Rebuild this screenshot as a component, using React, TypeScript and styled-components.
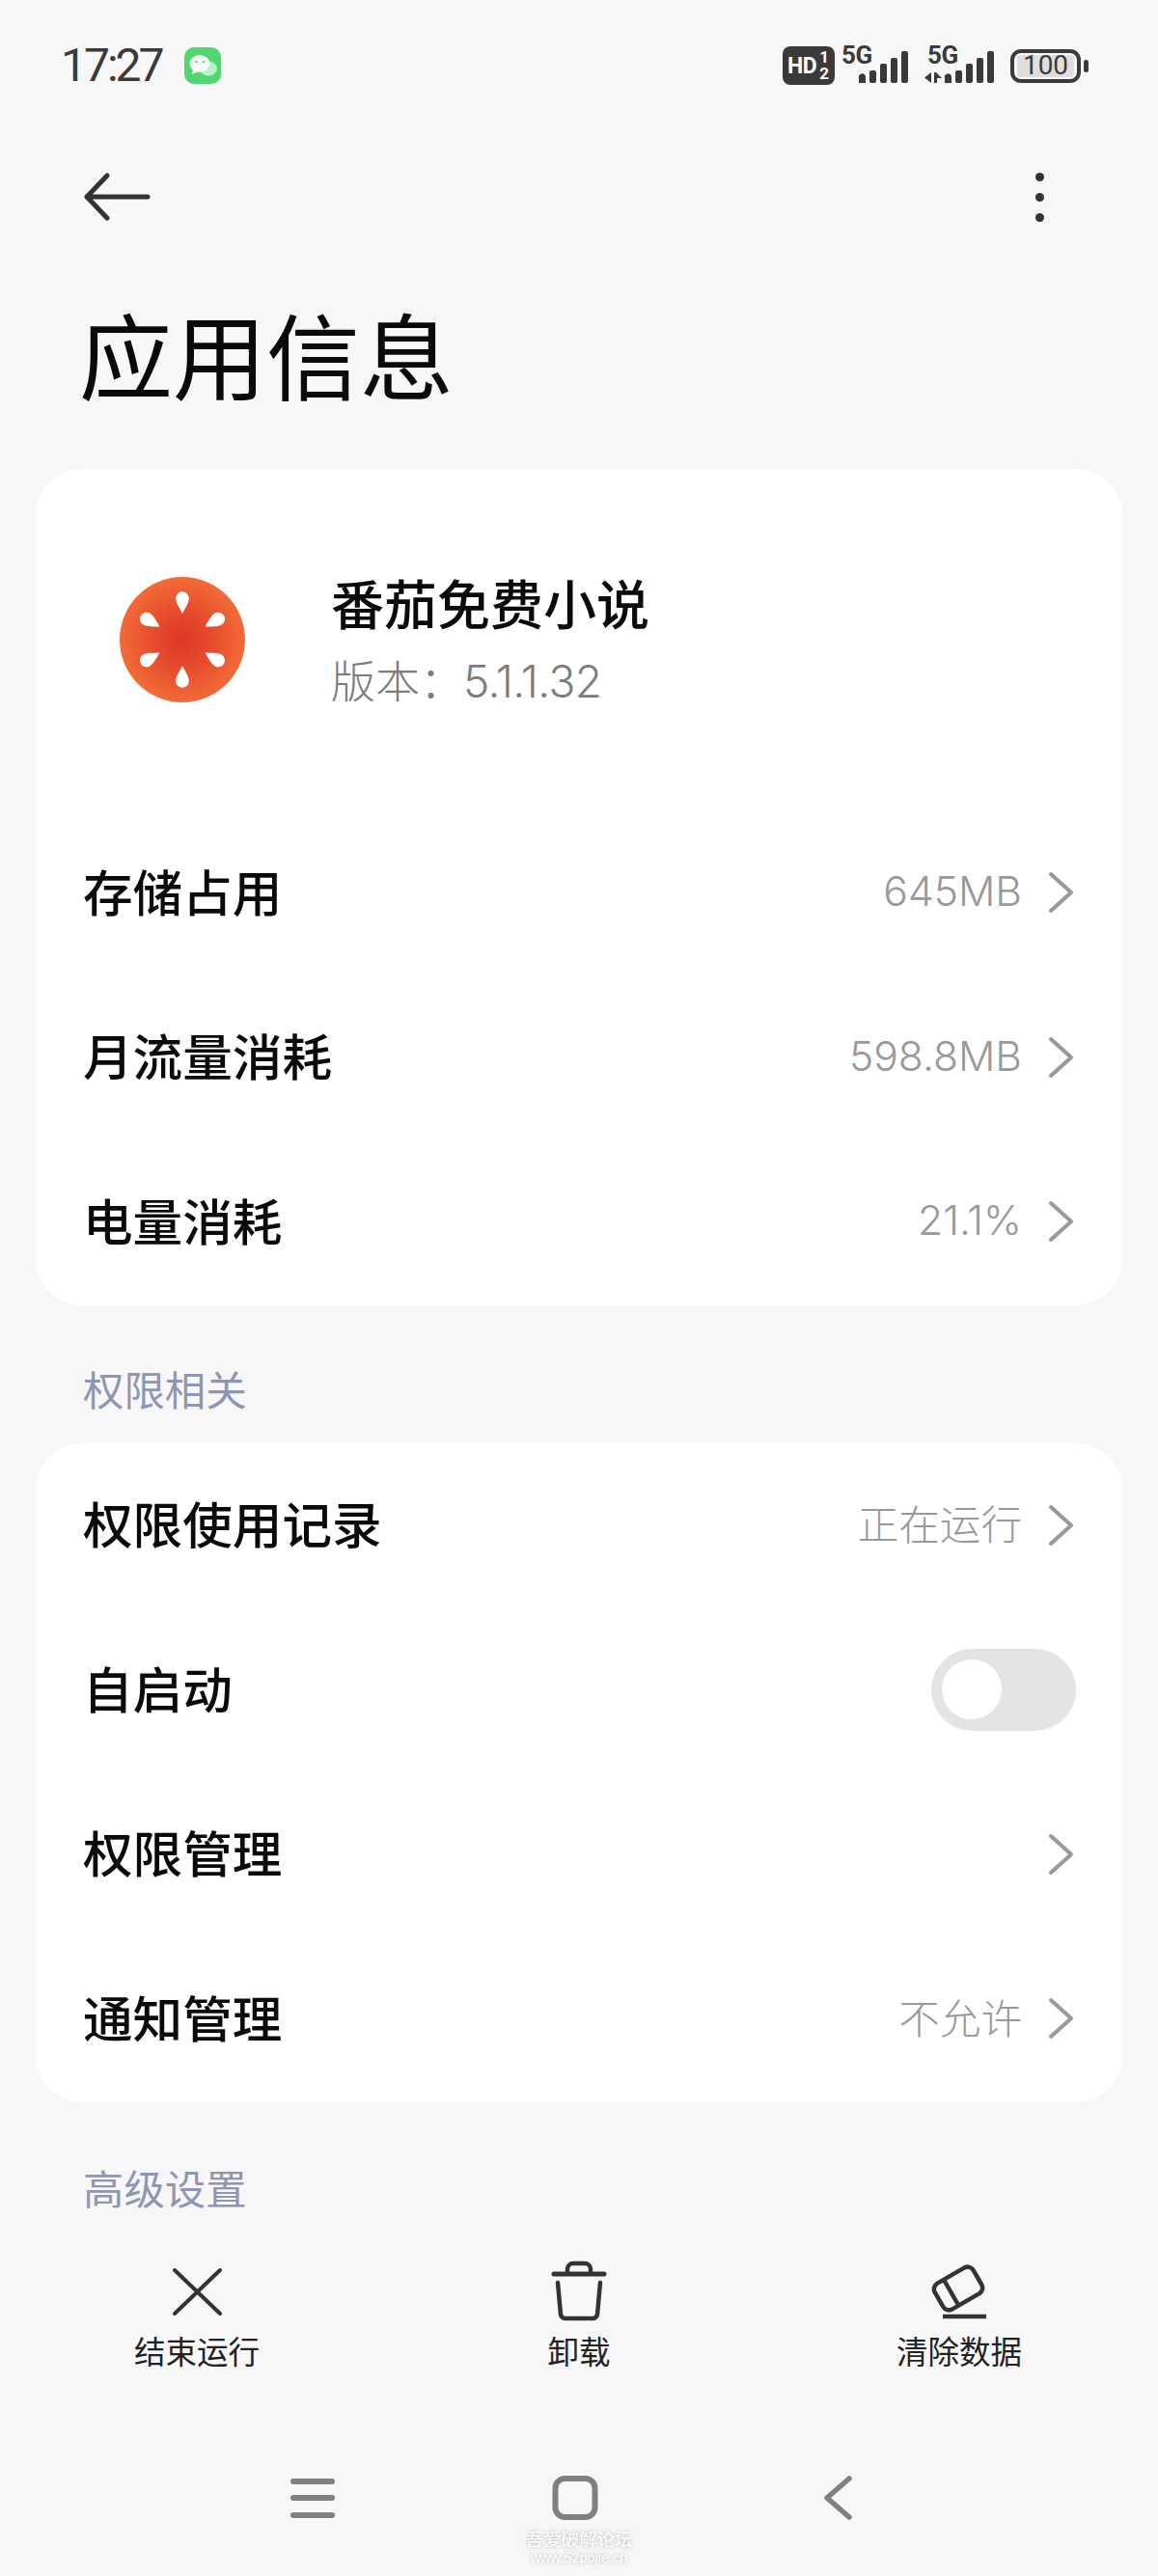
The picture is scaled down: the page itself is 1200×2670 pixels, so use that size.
import React from "react";
import styled, { createGlobalStyle } from "styled-components";

const Global = createGlobalStyle`
  html, body { margin: 0; padding: 0; background: #f7f7f7; }
  body { width: 1200px; height: 2670px; overflow: hidden; font-family: "Noto Sans CJK SC", "Noto Sans", sans-serif; color: #0a0a0a; }
`;

const Page = styled.div`
  width: 1200px;
  height: 2670px;
  display: flex;
  flex-direction: column;
  background: #f7f7f7;
`;

const StatusBar = styled.div`
  height: 136px;
  display: flex;
  align-items: center;
  padding: 0 80px 0 63px;
`;

const Time = styled.span`
  font-family: Roboto, sans-serif;
  font-size: 48px;
  font-weight: 400;
  line-height: 1;
  color: #3a3a3a;
  letter-spacing: -3px;
`;

const WeChat = styled.svg`
  width: 38px;
  height: 38px;
  margin-left: 23px;
`;

const StatusRight = styled.div`
  margin-left: auto;
  display: flex;
  align-items: center;
`;

const HdBadge = styled.div`
  width: 54px;
  height: 40px;
  border-radius: 8px;
  background: #3a3a3a;
  color: #fff;
  display: flex;
  align-items: center;
  padding-left: 5px;
  box-sizing: border-box;
  font-family: Roboto, sans-serif;
  font-weight: 700;
  font-size: 23px;
  letter-spacing: -0.5px;
`;

const Fraction = styled.span`
  display: flex;
  flex-direction: column;
  font-size: 17px;
  line-height: 17px;
  margin-left: 3px;
  align-items: center;
`;

const Signal = styled.div<{ $w: number; $gap: number }>`
  position: relative;
  width: ${(p) => p.$w}px;
  height: 40px;
  margin-left: ${(p) => p.$gap}px;
`;

const FiveG = styled.span<{ $left: number }>`
  position: absolute;
  left: ${(p) => p.$left}px;
  top: -3px;
  font-family: Roboto, sans-serif;
  font-weight: 700;
  font-size: 26px;
  line-height: 24px;
  letter-spacing: -0.5px;
  color: #3a3a3a;
`;

const Bars = styled.svg`
  position: absolute;
  left: 0;
  top: 0;
  display: block;
`;

const Battery = styled.div`
  position: relative;
  width: 73px;
  height: 35px;
  margin-left: 15px;
  box-sizing: border-box;
  border: 4px solid #3a3a3a;
  border-radius: 11px;
  padding: 2px 3px;
  &::after {
    content: "";
    position: absolute;
    right: -12px;
    top: 7px;
    width: 5px;
    height: 13px;
    border-radius: 3px;
    background: #3a3a3a;
  }
`;

const BatteryFill = styled.div`
  height: 100%;
  background: #dedede;
  border-radius: 4px;
  display: flex;
  align-items: center;
  justify-content: center;
  font-family: Roboto, sans-serif;
  font-size: 28px;
  color: #3a3a3a;
  line-height: 1;
`;

const Nav = styled.div`
  height: 136px;
  display: flex;
  align-items: center;
  justify-content: space-between;
  padding: 0 118px 0 87px;
`;

const BackArrow = styled.svg`
  width: 70px;
  height: 50px;
  display: block;
`;

const Dots = styled.div`
  display: flex;
  flex-direction: column;
  gap: 12px;
`;

const Dot = styled.span`
  width: 9px;
  height: 9px;
  border-radius: 50%;
  background: #333;
`;

const Title = styled.h1`
  margin: 0 0 28px;
  height: 186px;
  padding-left: 82px;
  font-size: 97px;
  font-weight: 400;
  line-height: 186px;
  color: #0a0a0a;
`;

const Card = styled.section`
  margin: 0 37px;
  background: #fff;
  border-radius: 48px;
  padding-bottom: 1px;
`;

const AppHeader = styled.div`
  height: 354px;
  display: flex;
  align-items: center;
  padding-left: 87px;
  box-sizing: border-box;
`;

const AppLogo = styled.svg`
  width: 132px;
  height: 132px;
  margin-left: -1px;
  margin-right: 88px;
`;

const AppMeta = styled.div`
  display: flex;
  flex-direction: column;
  gap: 14px;
  margin-top: -3px;
`;

const AppName = styled.div`
  font-size: 55px;
  font-weight: 500;
  line-height: 72px;
  color: #0a0a0a;
`;

const AppVersion = styled.div`
  font-size: 46px;
  line-height: 60px;
  color: #7c7c7c;
  font-weight: 300;
`;

const VersionNumber = styled.span`
  font-family: Inter, sans-serif;
  letter-spacing: -0.6px;
  margin-left: -1px;
`;

const Row = styled.div`
  height: 170.5px;
  display: flex;
  align-items: center;
  padding: 0 50px;
  box-sizing: border-box;
`;

const RowLabel = styled.span`
  font-size: 51.6px;
  font-weight: 500;
  margin-left: -1px;
  padding-bottom: 6px;
  color: #0a0a0a;
`;

const RowValue = styled.span<{ $cjk?: boolean }>`
  margin-left: auto;
  font-family: Inter, "Noto Sans CJK SC", sans-serif;
  font-size: 42.6px;
  font-weight: 300;
  color: #999;
  padding-bottom: ${(p) => (p.$cjk ? "6px" : "3px")};
`;

const Chevron = styled.svg<{ $solo?: boolean }>`
  width: 27px;
  height: 44px;
  margin-left: ${(p) => (p.$solo ? "auto" : "27px")};
`;

const Toggle = styled.div`
  margin-left: auto;
  margin-right: -2px;
  width: 150px;
  height: 85px;
  border-radius: 43px;
  background: #e4e4e4;
  display: flex;
  align-items: center;
  padding-left: 11px;
  box-sizing: border-box;
`;

const Knob = styled.span`
  width: 62px;
  height: 62px;
  border-radius: 50%;
  background: #fff;
`;

const SectionLabel = styled.div`
  height: 143px;
  box-sizing: border-box;
  padding: 56px 0 0 86px;
  font-size: 42.4px;
  line-height: 60px;
  color: #8f96b3;
`;

const SectionLabelLast = styled(SectionLabel)`
  height: 122px;
  padding-top: 58px;
`;

const Toolbar = styled.div`
  display: grid;
  grid-template-columns: 396px 396px 392px;
  padding: 0 6px;
  margin-top: 42px;
`;

const ToolItem = styled.div`
  display: flex;
  flex-direction: column;
  align-items: center;
`;

const ToolIcon = styled.svg`
  width: 64px;
  height: 64px;
  display: block;
`;

const ToolLabel = styled.span`
  margin-top: 7px;
  font-size: 32.5px;
  line-height: 44px;
  color: #222;
`;

const SystemNav = styled.div`
  position: relative;
  display: grid;
  grid-template-columns: repeat(3, 272px);
  justify-content: center;
  padding-right: 9px;
  margin-top: 101px;
`;

const SystemSlot = styled.div`
  display: flex;
  justify-content: center;
`;

const SystemIcon = styled.svg`
  width: 60px;
  height: 60px;
  display: block;
`;

const Watermark = styled.div`
  position: absolute;
  left: 0;
  right: 0;
  top: 62px;
  text-align: center;
  color: #fff;
  text-shadow: 0 0 4px rgba(0, 0, 0, 0.3);
  font-size: 18.5px;
  line-height: 20px;
`;

const WatermarkUrl = styled.div`
  font-family: "Liberation Sans", sans-serif;
  font-size: 14.5px;
  line-height: 20px;
`;

const stroke = "#333";
const barColor = "#3a3a3a";

const Arrow = () => (
  <BackArrow viewBox="0 0 70 50">
    <path d="M24 3 L3 25 L24 47 M3 25 H66" fill="none" stroke={stroke} strokeWidth="5" strokeLinecap="round" strokeLinejoin="round" />
  </BackArrow>
);

const Chev = ({ solo }: { solo?: boolean }) => (
  <Chevron $solo={solo} viewBox="0 0 27 44">
    <path d="M3 3 L24 22 L3 41" fill="none" stroke="#999" strokeWidth="4" strokeLinecap="round" strokeLinejoin="round" />
  </Chevron>
);

const seeds = [0, 60, 120, 180, 240, 300];

const Logo = () => (
  <AppLogo viewBox="0 0 132 132">
    <defs>
      <radialGradient id="tomato" cx="50%" cy="50%" r="50%">
        <stop offset="0%" stopColor="#df3626" />
        <stop offset="45%" stopColor="#e54b2c" />
        <stop offset="100%" stopColor="#f26b38" />
      </radialGradient>
    </defs>
    <circle cx="66" cy="66" r="65" fill="url(#tomato)" />
    {seeds.map((a) => (
      <path key={a} transform={`rotate(${a} 66 66)`} d="M66 39 C63 33 59.2 28 59.2 23 A6.8 6.8 0 0 1 72.8 23 C72.8 28 69 33 66 39 Z" fill="#fff" />
    ))}
  </AppLogo>
);

const SignalBars = ({ offset, arrows }: { offset: number; arrows?: boolean }) => (
  <Bars width="74" height="40" viewBox="0 0 74 40">
    {arrows && (
      <>
        <path d="M7 27 V38 L0 32.5 Z" fill={barColor} />
        <path d="M10 27 H12 L18 33 H13 V38 H10 Z" fill={barColor} />
      </>
    )}
    <path d={`M${offset} 38 V33 a3.5 3.5 0 0 1 7 -2 V38 Z`} fill={barColor} />
    <rect x={offset + 11} y="25" width="7" height="13" rx="2" fill={barColor} />
    <rect x={offset + 22} y="18" width="7" height="20" rx="2" fill={barColor} />
    <rect x={offset + 33} y="12" width="7" height="26" rx="2" fill={barColor} />
    <rect x={offset + 44} y="5" width="7" height="33" rx="2" fill={barColor} />
  </Bars>
);

export default function App() {
  return (
    <Page>
      <Global />
      <StatusBar>
        <Time>17:27</Time>
        <WeChat viewBox="0 0 38 38">
          <rect width="38" height="38" rx="10" fill="#52d672" />
          <ellipse cx="25" cy="22" rx="9" ry="7.5" fill="#bdf0c9" />
          <ellipse cx="16" cy="17" rx="10.5" ry="9" fill="#f4fff6" />
          <path d="M9 23 L8 28 L14 25 Z" fill="#f4fff6" />
          <circle cx="12.5" cy="15" r="1.1" fill="#52a86a" />
          <circle cx="20" cy="15" r="1.1" fill="#52a86a" />
        </WeChat>
        <StatusRight>
          <HdBadge>
            HD
            <Fraction>
              <span>1</span>
              <span>2</span>
            </Fraction>
          </HdBadge>
          <Signal $w={70} $gap={7}>
            <SignalBars offset={18} />
            <FiveG $left={0}>5G</FiveG>
          </Signal>
          <Signal $w={74} $gap={16}>
            <SignalBars offset={21} arrows />
            <FiveG $left={3}>5G</FiveG>
          </Signal>
          <Battery>
            <BatteryFill>100</BatteryFill>
          </Battery>
        </StatusRight>
      </StatusBar>

      <Nav>
        <Arrow />
        <Dots>
          <Dot />
          <Dot />
          <Dot />
        </Dots>
      </Nav>

      <Title>应用信息</Title>

      <Card>
        <AppHeader>
          <Logo />
          <AppMeta>
            <AppName>番茄免费小说</AppName>
            <AppVersion>
              版本：<VersionNumber>5.1.1.32</VersionNumber>
            </AppVersion>
          </AppMeta>
        </AppHeader>
        <Row>
          <RowLabel>存储占用</RowLabel>
          <RowValue>645MB</RowValue>
          <Chev />
        </Row>
        <Row>
          <RowLabel>月流量消耗</RowLabel>
          <RowValue>598.8MB</RowValue>
          <Chev />
        </Row>
        <Row>
          <RowLabel>电量消耗</RowLabel>
          <RowValue>21.1%</RowValue>
          <Chev />
        </Row>
      </Card>

      <SectionLabel>权限相关</SectionLabel>

      <Card>
        <Row>
          <RowLabel>权限使用记录</RowLabel>
          <RowValue $cjk>正在运行</RowValue>
          <Chev />
        </Row>
        <Row>
          <RowLabel>自启动</RowLabel>
          <Toggle>
            <Knob />
          </Toggle>
        </Row>
        <Row>
          <RowLabel>权限管理</RowLabel>
          <Chev solo />
        </Row>
        <Row>
          <RowLabel>通知管理</RowLabel>
          <RowValue $cjk>不允许</RowValue>
          <Chev />
        </Row>
      </Card>

      <SectionLabelLast>高级设置</SectionLabelLast>

      <Toolbar>
        <ToolItem>
          <ToolIcon viewBox="0 0 64 64">
            <path d="M9 10 L56 55 M56 10 L9 55" fill="none" stroke={stroke} strokeWidth="4" strokeLinecap="round" />
          </ToolIcon>
          <ToolLabel>结束运行</ToolLabel>
        </ToolItem>
        <ToolItem>
          <ToolIcon viewBox="0 0 64 64">
            <path d="M6 14 H58" stroke={stroke} strokeWidth="5" strokeLinecap="round" fill="none" />
            <path d="M20 14 V9 a6 6 0 0 1 6 -6 H38 a6 6 0 0 1 6 6 V14" stroke={stroke} strokeWidth="4.5" fill="none" />
            <path d="M10 23 L13 56 a5 5 0 0 0 5 4 H46 a5 5 0 0 0 5 -4 L54 23" stroke={stroke} strokeWidth="4.5" strokeLinecap="round" fill="none" />
          </ToolIcon>
          <ToolLabel>卸载</ToolLabel>
        </ToolItem>
        <ToolItem>
          <ToolIcon viewBox="0 0 64 64">
            <rect x="-23" y="-15.5" width="46" height="31" rx="7" transform="translate(31 29) rotate(-30)" fill="none" stroke={stroke} strokeWidth="4.5" />
            <path d="M15.5 19 L31 46" stroke={stroke} strokeWidth="4.5" fill="none" />
            <path d="M15 58 H60" stroke={stroke} strokeWidth="4.5" fill="none" />
          </ToolIcon>
          <ToolLabel>清除数据</ToolLabel>
        </ToolItem>
      </Toolbar>

      <SystemNav>
        <SystemSlot>
          <SystemIcon viewBox="0 0 60 60">
            <path d="M10 13 H50 M10 30 H50 M10 48 H50" stroke="#808080" strokeWidth="6" strokeLinecap="round" fill="none" />
          </SystemIcon>
        </SystemSlot>
        <SystemSlot>
          <SystemIcon viewBox="0 0 60 60">
            <rect x="9.5" y="10" width="41" height="40" rx="10" fill="none" stroke="#808080" strokeWidth="6" />
          </SystemIcon>
        </SystemSlot>
        <SystemSlot>
          <SystemIcon viewBox="0 0 60 60">
            <path d="M42 10 L19 30 L42 50" fill="none" stroke="#808080" strokeWidth="5.5" strokeLinecap="round" strokeLinejoin="round" />
          </SystemIcon>
        </SystemSlot>
        <Watermark>
          吾爱破解论坛
          <WatermarkUrl>www.52pojie.cn</WatermarkUrl>
        </Watermark>
      </SystemNav>
    </Page>
  );
}
